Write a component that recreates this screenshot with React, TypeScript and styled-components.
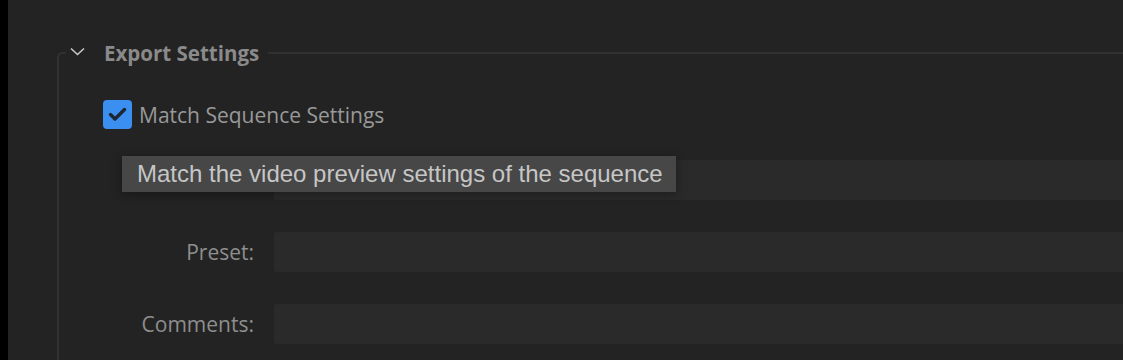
import * as React from 'react'
import styled, { createGlobalStyle } from 'styled-components'

const GlobalStyle = createGlobalStyle`
  html, body {
    margin: 0;
    padding: 0;
    background: #232323;
    overflow: hidden;
  }
  * {
    box-sizing: border-box;
  }
`

const Page = styled.div`
  display: flex;
  width: 1123px;
  height: 360px;
  background: #232323;
  font-family: 'Open Sans', 'Noto Sans', sans-serif;
`

const SideStrip = styled.div`
  width: 8px;
  flex: none;
  background: #000;
`

const Main = styled.div`
  flex: 1;
  padding-top: 40px;
  padding-left: 49px;
  min-width: 0;
`

const Section = styled.fieldset`
  margin: 0;
  padding: 0 0 0 7px;
  height: 330px;
  border: 2px solid #313131;
  border-right: none;
  border-bottom: none;
  border-top-left-radius: 6px;
  min-width: 0;
`

const Legend = styled.legend`
  display: flex;
  align-items: center;
  gap: 19px;
  padding: 0 9px 0 4px;
  height: 26px;
  font-size: 20.5px;
  font-weight: 700;
  color: #8a8a8a;
`

const Chevron = styled.svg`
  width: 15px;
  height: 9px;
  flex: none;
  margin-top: -3px;
`

const Content = styled.div`
  position: relative;
  margin-left: 37px;
  padding-top: 34px;
`

const CheckRow = styled.label`
  display: flex;
  align-items: center;
  gap: 7px;
  height: 29px;
  font-size: 21px;
  color: #999;
`

const CheckBox = styled.span`
  display: flex;
  align-items: center;
  justify-content: center;
  width: 29px;
  height: 29px;
  border-radius: 4px;
  background: #3a8ff0;
`

const Fields = styled.div`
  display: grid;
  grid-template-columns: 151px 1fr;
  column-gap: 20px;
  row-gap: 32px;
  margin-top: 31px;
`

const Label = styled.div`
  height: 40px;
  display: flex;
  align-items: center;
  justify-content: flex-end;
  font-size: 21px;
  color: #8e8e8e;
`

const Input = styled.div`
  height: 40px;
  background: #2a2a2a;
  border-radius: 3px 0 0 3px;
`

const Tooltip = styled.div`
  position: absolute;
  left: 19px;
  top: 90px;
  width: 554px;
  height: 36px;
  padding-left: 15px;
  display: flex;
  align-items: center;
  background: #474747;
  color: #c6c6c6;
  font-family: 'Liberation Sans', Arial, sans-serif;
  font-size: 24px;
  box-shadow: 0 2px 10px rgba(0, 0, 0, 0.35);
  white-space: nowrap;
`

// first row's label sits under the tooltip in the screenshot
const fields = ['', 'Preset:', 'Comments:']

export default function App() {
  return (
    <>
      <GlobalStyle />
      <Page>
        <SideStrip />
        <Main>
          <Section>
            <Legend>
              <Chevron viewBox="0 0 15 9">
                <path d="M1 1.5 L7.5 7.5 L14 1.5" fill="none" stroke="#c8c8c8" strokeWidth="1.6" />
              </Chevron>
              Export Settings
            </Legend>
            <Content>
              <CheckRow>
                <CheckBox>
                  <svg width="19" height="15" viewBox="0 0 19 15">
                    <path d="M2.5 7.5 L7 12 L16.5 2.5" fill="none" stroke="#1d2633" strokeWidth="3.4" strokeLinecap="round" strokeLinejoin="round" />
                  </svg>
                </CheckBox>
                Match Sequence Settings
              </CheckRow>
              <Fields>
                {fields.map((f, i) => (
                  <React.Fragment key={i}>
                    <Label>{f}</Label>
                    <Input />
                  </React.Fragment>
                ))}
              </Fields>
              <Tooltip>Match the video preview settings of the sequence</Tooltip>
            </Content>
          </Section>
        </Main>
      </Page>
    </>
  )
}
